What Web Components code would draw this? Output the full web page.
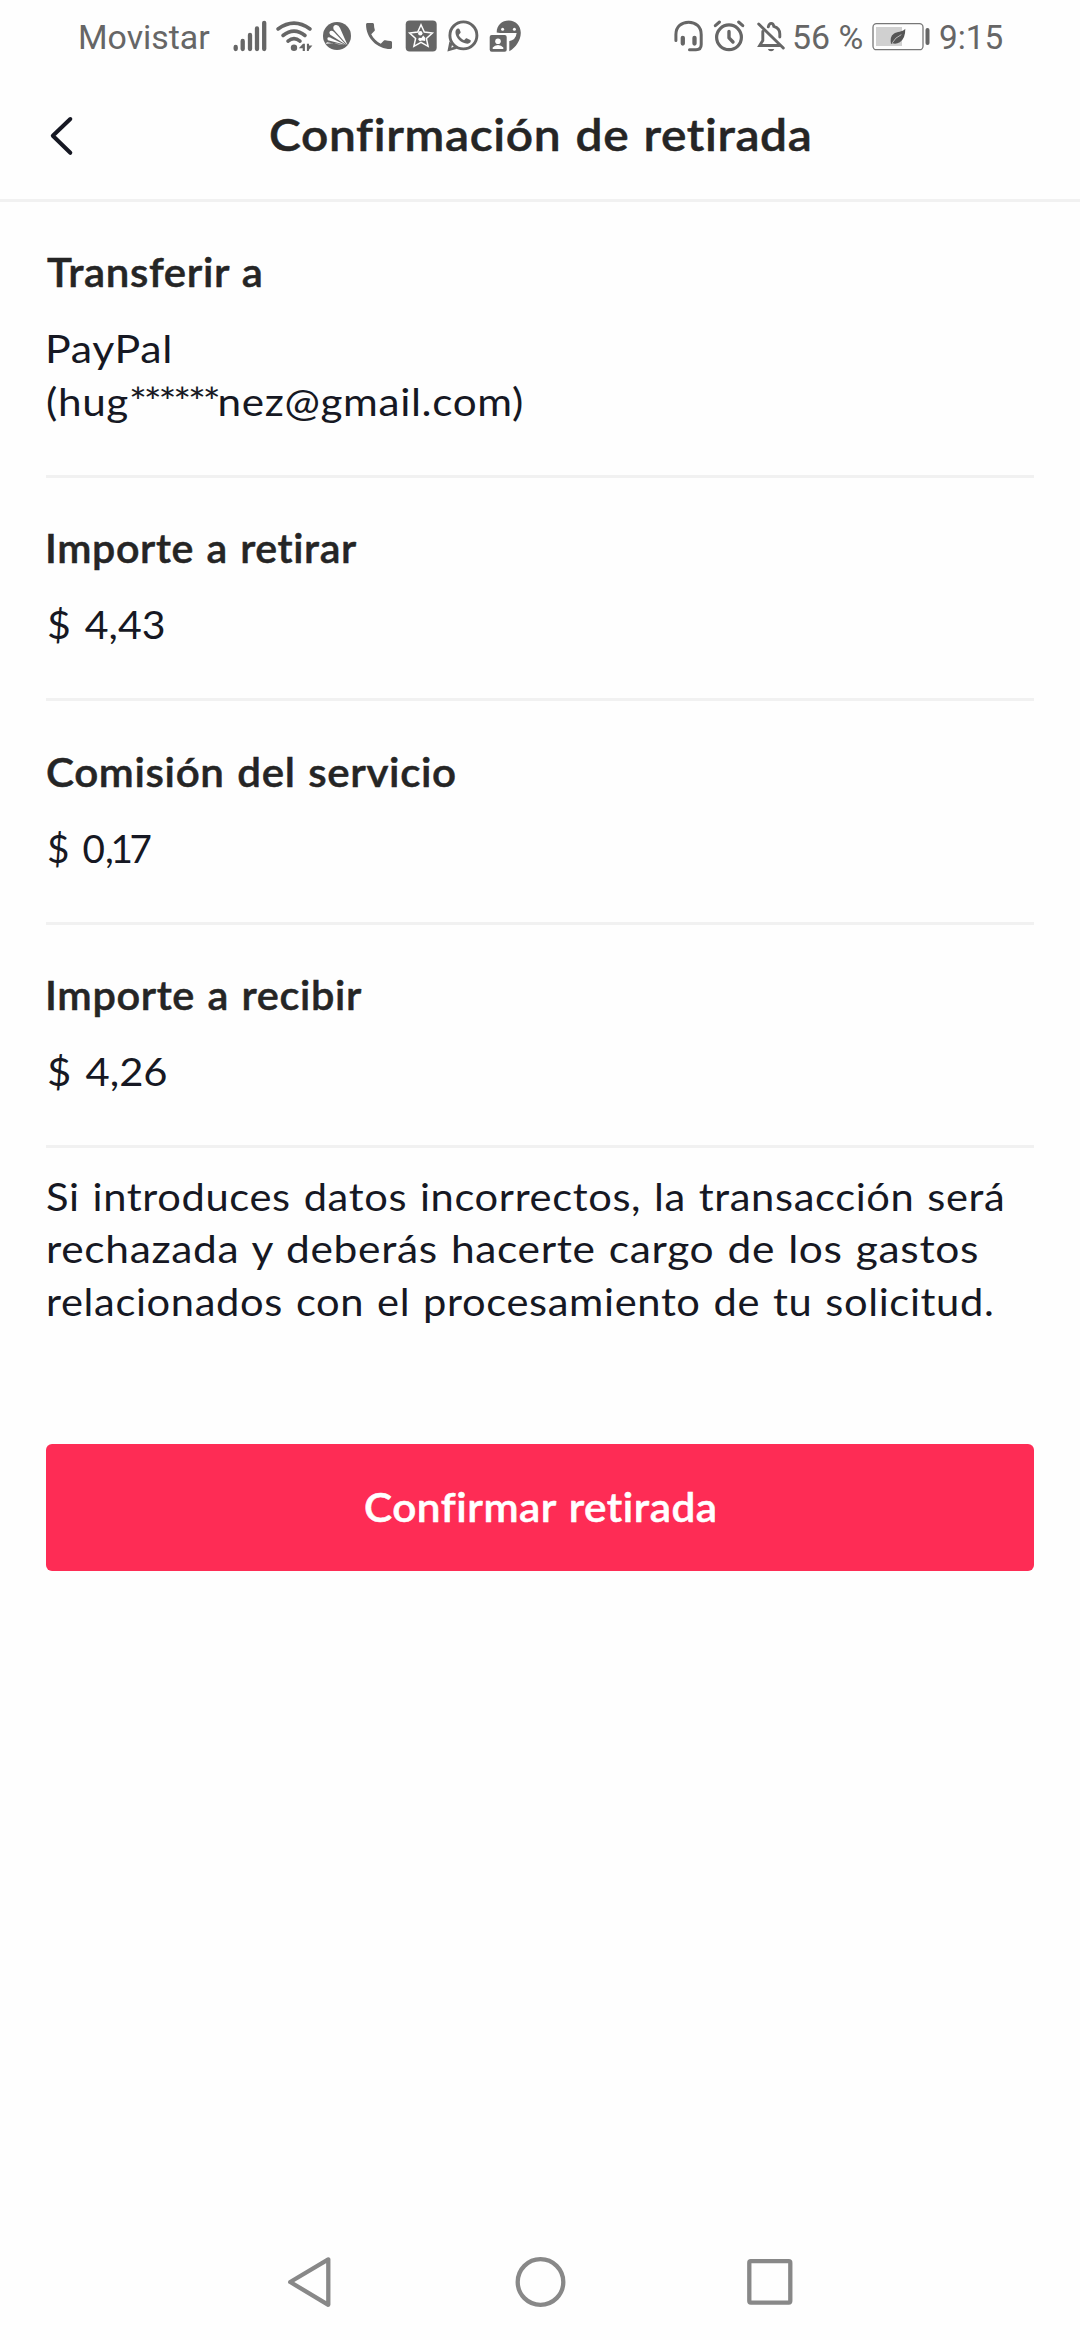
<!DOCTYPE html>
<html lang="es">
<head>
<meta charset="utf-8">
<title>Confirmación de retirada</title>
<style>
html,body{margin:0;padding:0;background:#fefefe}
body{width:1080px;height:2340px;overflow:hidden}
</style>
</head>
<body>
<withdraw-app></withdraw-app>
<script>
const define = (name, html, init) => {
  const t = document.createElement('template');
  t.innerHTML = html;
  customElements.define(name, class extends HTMLElement {
    constructor() { super(); this.attachShadow({mode: 'open'}).append(t.content.cloneNode(true)); }
    connectedCallback() { if (init) init(this); }
  });
};

/* One line of text: "inset" is the ink's left edge inside the box, "span" the ink's width. */
const fitLine = el => {
  const cs = getComputedStyle(el), ctx = document.createElement('canvas').getContext('2d');
  const text = el.textContent, span = el.shadowRoot.querySelector('span');
  ctx.font = `${cs.fontWeight} ${cs.fontSize} ${cs.fontFamily}`;
  const m = ctx.measureText(text);
  const bearing = -m.actualBoundingBoxLeft, trail = m.width - m.actualBoundingBoxRight + (parseFloat(cs.letterSpacing) || 0);
  const ink = span.getBoundingClientRect().width - bearing - trail;
  const k = el.getAttribute('span') / ink;
  span.style.transform = `scaleX(${k})`;
  span.style.marginLeft = el.getAttribute('inset') - bearing * k + 'px';
};
define('text-line', `<style>:host{display:block;white-space:pre;font-variant-ligatures:none}span{display:inline-block;transform-origin:0 50%}</style><span><slot></slot></span>`);

const ICONS = {
  signal: [228, 44, `<path stroke-width="4.3" d="M235.7 47v2M242.7 41v8M250 35v14M257 28.5V49M264.2 22.8V49"/>`],
  wifi: [272, 46, `<g stroke-width="3.6"><path d="M278 29Q294 17.2 310 29"/><path d="M283 35.5Q294 26.8 305 35.5"/><path d="M288 41.2Q294 36.2 300 41.2"/></g><g class="f"><circle cx="294" cy="47.7" r="3.2"/><path d="M298.8 48.2l4.2-4.4h1.9v7.3h-2.2v-2.9zM306.9 43.8h2.1v1.8h3.4l-3.3 4-.4 1.5h-1.8z"/></g>`],
  avast: [318, 38, `<circle class="f" cx="337" cy="36" r="14"/><g fill="#fefefe" stroke="none"><path d="M347.6 45.2L333.6 29.4Q332.4 25.6 335.6 25Q338.6 24.6 340 28z"/><path d="M346.3 44.9L330.3 34.8Q328.4 32 330.4 30.9Q332.2 30.2 334 32z"/><path d="M345 44.8L327.9 40.2Q326.6 37.6 328.7 37.3Q330.3 37.3 331.5 38.3z"/><path d="M344 45.2L327 42.2 325.6 43.8Q335 42.3 344 45.2z"/></g>`],
  phone: [356, 44, `<path class="f" transform="translate(361.7 18.7) scale(1.444)" d="M6.62 10.79c1.44 2.83 3.76 5.14 6.59 6.59l2.2-2.2c.27-.27.67-.36 1.02-.24 1.12.37 2.33.57 3.57.57.55 0 1 .45 1 1V20c0 .55-.45 1-1 1C10.61 21 3 13.39 3 4c0-.55.45-1 1-1h3.5c.55 0 1 .45 1 1 0 1.25.2 2.45.57 3.57.11.35.03.74-.25 1.02z"/>`],
  star: [400, 42, `<rect class="f" x="405.7" y="20.5" width="31" height="31" rx="4"/><path stroke="#fefefe" stroke-width="1.5" d="M421 24.8l3.3 7.2 8.1 1-6 5.5 1.7 7.9-7.1-4-7.1 4 1.7-7.9-6-5.5 8.1-1z"/><g fill="#fefefe" stroke="none"><circle cx="420.3" cy="33.2" r="2.2"/><path d="M418.8 37.8l2.6.2 1.8-2.5 2 2.3v3.2l-3.3-.5-2 .8-1.7-1.6z"/></g>`],
  whatsapp: [442, 42, `<circle cx="463.4" cy="35.4" r="13.5" stroke-width="2.9"/><path class="f" d="M449.4 41.5L447.4 51.6 457.2 48.7 454.2 46.6 451.3 47.8 452.2 44.2z"/><path class="f" transform="translate(452.7 25.7) scale(.86)" d="M7 10.8c1.4 2.8 3.4 4.8 6.2 6.2l2-2c.5-.5 1-.5 1.6-.2l3.6 1.8c.8.4.7 1 .5 1.7-.5 1.5-2 2.6-3.9 2.6C10 20.7 3.2 14 3.2 7.6 3.2 5.3 4.5 3.3 6.2 3.2c1-.1 1.4.2 1.7.9l1.3 3.2c.2.5 0 .9-.3 1.3z"/>`],
  messages: [484, 42, `<path class="f" d="M496.7 32.5C496.7 25 502 20.5 508.8 20.5S520.8 25.5 520.8 32.8C520.8 40 516 47.5 509.3 51.3V34.5z"/><g fill="#fefefe" stroke="none"><circle cx="502.6" cy="29.3" r="1.5"/><circle cx="514.4" cy="29.3" r="1.5"/><path d="M500.4 33h16.2Q516 40 508.7 41.3L500 36z"/><rect x="487" y="33.3" width="21.2" height="20" rx="2"/></g><rect class="f" x="489.7" y="34.9" width="17" height="16.8" rx="2"/><g fill="#fefefe" stroke="none"><circle cx="498" cy="41.3" r="2.8"/><path d="M492.7 48.9v-1.3q2-2.5 5.3-2.5t5.3 2.5v1.3z"/></g>`],
  headset: [666, 42, `<path stroke-width="3" d="M674.9 40.6V34.4C674.9 26.5 680.5 22.2 687.6 22.2S700.2 26.5 700.2 34.4V44.5Q700.2 49.8 695 49.8H688.5"/><path stroke-width="4.3" d="M681.8 37.8v5.8M693.5 37.8v5.8"/>`],
  alarm: [708, 42, `<circle cx="728" cy="37.3" r="12.4" stroke-width="3.2"/><path stroke-width="3" d="M714.3 25.7l4.2-3.7M737.6 22l4.2 3.7"/><path stroke-width="3.4" stroke-linejoin="round" d="M728 31.5V37.8L732 42"/>`],
  bell: [750, 42, `<g stroke-width="2.9"><path d="M757.7 24L782.3 48"/><path d="M761.8 31.5V40.5L758.7 45.5H778.5"/><path d="M767.3 26.8C768.5 22.4 772 22.3 772.8 26.3C777 27.4 778.8 30.2 778.8 34V37"/></g><path class="f" d="M766.8 49h6.5q-.8 2.3-3.25 2.3t-3.25-2.3z"/>`],
  battery: [868, 64, `<rect x="872" y="23.7" width="50" height="26" rx="3.5" stroke="#777" stroke-width="1.3"/><path fill="#d0d0d0" stroke="none" d="M875 27h26v19h-26z"/><rect class="f" x="924.5" y="28" width="4" height="17" rx="1.9"/><path fill="#555" stroke="none" d="M890 44Q888.7 36.5 892.5 34C896.5 31.3 901 32.5 904.3 28.8Q904.5 38.5 898.8 42.2Q895 44.5 891.4 43.2z"/><path stroke="#d0d0d0" stroke-width=".8" d="M891.5 42.5Q894 37.5 900 34.8"/>`]
};
define('status-icon', `<style>:host{display:block;height:75px;flex:none}svg{display:block;fill:none;stroke:#666;stroke-linecap:round}.f{fill:#666;stroke:none}</style><svg height="75"></svg>`, el => {
  const [x, w, art] = ICONS[el.getAttribute('name')], svg = el.shadowRoot.querySelector('svg');
  svg.setAttribute('viewBox', `${x} 0 ${w} 75`);
  svg.setAttribute('width', w);
  svg.innerHTML = art;
});

define('status-bar', `<style>
:host{display:flex;justify-content:space-between;box-sizing:border-box;height:75px;padding:0 69px 0 80px;font:400 33px/75px Roboto,sans-serif;color:#666}
div{display:flex}
.net{width:148px}.pct{width:76px}.time{width:78px}
</style>
<div><text-line class="net" inset="0.5" span="129.5">Movistar</text-line><status-icon name="signal"></status-icon><status-icon name="wifi"></status-icon><status-icon name="avast"></status-icon><status-icon name="phone"></status-icon><status-icon name="star"></status-icon><status-icon name="whatsapp"></status-icon><status-icon name="messages"></status-icon></div>
<div><status-icon name="headset"></status-icon><status-icon name="alarm"></status-icon><status-icon name="bell"></status-icon><text-line class="pct" inset="1" span="68">56 %</text-line><status-icon name="battery"></status-icon><text-line class="time" inset="7.3" span="62.7">9:15</text-line></div>`);

define('page-header', `<style>
:host{display:flex;align-items:center;box-sizing:border-box;height:127px;border-bottom:3px solid #f1f1f1;color:#252525;font:600 45px/60px Lato,sans-serif;-webkit-text-stroke:.5px #252525}
svg{width:100px;height:60px;flex:none;fill:none;stroke:#161823;stroke-width:4;stroke-linecap:round;stroke-linejoin:round}
::slotted(*){padding-bottom:6px}
</style><svg viewBox="0 107 100 60"><path d="M70.3 119L52.8 135.7L70.3 152.8"/></svg><slot></slot>`);

define('detail-row', `<style>
:host{display:block;padding:44.6px 0 47.3px;border-bottom:3px solid #f1f1f1}
:host(:first-child){padding:44.1px 0 47.8px}
.label{font-weight:600;color:#252525;line-height:52px;margin-bottom:24px;-webkit-text-stroke:.5px #252525}
.value{line-height:52.5px;color:#161823}
</style><div class="label"><slot name="label"></slot></div><div class="value"><slot></slot></div>`);

define('primary-button', `<style>
:host{display:block}
button{display:block;width:100%;height:127px;padding:0;border:0;border-radius:6px;background:#fe2c55;color:#fff;font:600 39.5px/52px Lato,sans-serif;letter-spacing:.5px;word-spacing:1.5px;text-align:left;-webkit-text-stroke:.5px #fff}
</style><button type="button"><slot></slot></button>`);

define('nav-bar', `<style>
:host{display:flex;justify-content:center;height:116px}
svg{width:231px;height:116px;fill:none;stroke:#888;stroke-width:4.3;stroke-linejoin:round}
</style>
<svg viewBox="193.5 2224 231 116"><path d="M289.7 2282L327.8 2259.4V2304.8Z"/></svg>
<svg viewBox="424.5 2224 231 116"><circle cx="540" cy="2282" r="22.8"/></svg>
<svg viewBox="655.5 2224 231 116"><rect x="748.8" y="2261.2" width="41" height="41.4" rx="1.5"/></svg>`);

define('withdraw-app', `<style>
:host{display:flex;flex-direction:column;height:2340px;font:400 39.5px/52.5px Lato,sans-serif;color:#161823}
page-header,main{letter-spacing:.6px;word-spacing:1.5px}
main{flex:1;padding:0 46px}
.amount{letter-spacing:0;word-spacing:3.3px}
.mask{letter-spacing:-3px}
.tight{letter-spacing:-3.5px}
.note{margin-top:21.9px}
primary-button{margin-top:116.5px}
</style>
<status-bar></status-bar>
<page-header><text-line inset="170.5" span="539">Confirmación de retirada</text-line></page-header>
<main>
<detail-row><text-line slot="label" inset="0.5" span="214">Transferir a</text-line><text-line inset="2.5" span="121.5">PayPal</text-line><text-line inset="1.5" span="474.5">(hug<span class="mask">******</span>nez@gmail.com)</text-line></detail-row>
<detail-row><text-line slot="label" inset="2.5" span="308.5">Importe a retirar</text-line><text-line class="amount" inset="1.7" span="115.5">$ 4,43</text-line></detail-row>
<detail-row><text-line slot="label" inset="1.2" span="408.5">Comisión del servicio</text-line><text-line class="amount" inset="1.7" span="103">$ 0<span class="tight">,1</span>7</text-line></detail-row>
<detail-row><text-line slot="label" inset="2.5" span="313.5">Importe a recibir</text-line><text-line class="amount" inset="1.7" span="118.6">$ 4,26</text-line></detail-row>
<div class="note"><text-line inset="1.5" span="956">Si introduces datos incorrectos, la transacción será</text-line><text-line inset="2.5" span="929">rechazada y deberás hacerte cargo de los gastos</text-line><text-line inset="2.5" span="944.3">relacionados con el procesamiento de tu solicitud.</text-line></div>
<primary-button><text-line inset="319" span="350">Confirmar retirada</text-line></primary-button>
</main>
<nav-bar></nav-bar>`, el => {
  const roots = [el.shadowRoot, el.shadowRoot.querySelector('status-bar').shadowRoot];
  roots.forEach(root => root.querySelectorAll('text-line').forEach(fitLine));
});
</script>
</body>
</html>
